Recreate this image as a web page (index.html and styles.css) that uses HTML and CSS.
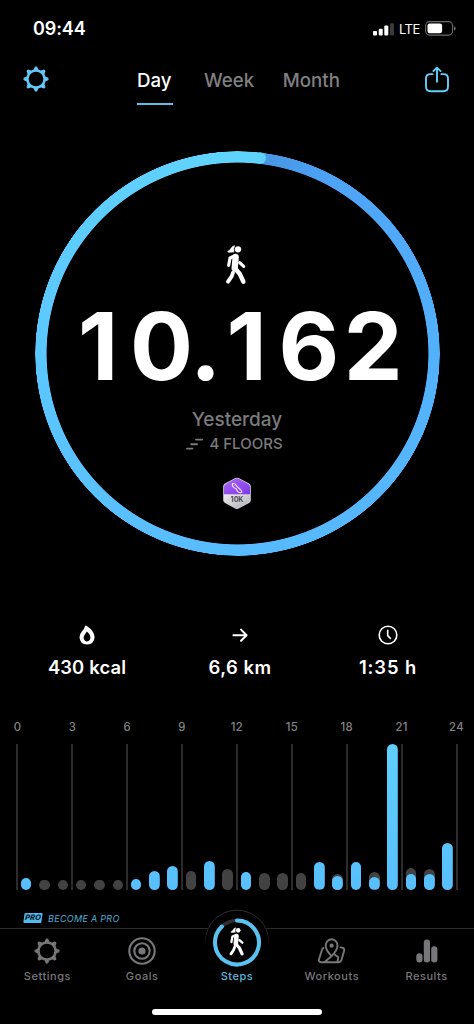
FILE: index.html
```html
<!DOCTYPE html>
<html lang="en">
<head>
<meta charset="utf-8">
<title>Steps</title>
<link rel="stylesheet" href="styles.css">
</head>
<body>
<svg class="defs" aria-hidden="true">
  <symbol id="walker" viewBox="46 28 68 124">
    <circle cx="85" cy="44" r="9.5" fill="#fff"/>
    <path d="M75 33Q70 33 65 39Q61 48 54 50Q54 54 61 53L73 52Q71 41 75 33Z" fill="#fff" stroke="#fff" stroke-width="1.5"/>
    <g fill="none" stroke="#fff" stroke-linecap="round" stroke-linejoin="round">
      <path d="M74 64L61 70L57 92" stroke-width="9.5"/>
      <path d="M78 67L75 101" stroke-width="19"/>
      <path d="M75 100L90 117L101 141" stroke-width="13.5"/>
      <path d="M70 114L66 125L55 141" stroke-width="11.5"/>
      <path d="M90 84L102 95" stroke-width="9.5"/>
    </g>
  </symbol>
  <symbol id="gear" viewBox="0 0 26 26">
    <circle cx="13" cy="13" r="8.6" fill="none" stroke="currentColor" stroke-width="2.5"/>
    <g fill="currentColor" stroke="currentColor" stroke-width="1.2" stroke-linejoin="round">
      <path id="tooth" d="M11 4.2L12.4 1.1H13.6L15 4.2Z"/>
      <use href="#tooth" transform="rotate(45 13 13)"/>
      <use href="#tooth" transform="rotate(90 13 13)"/>
      <use href="#tooth" transform="rotate(135 13 13)"/>
      <use href="#tooth" transform="rotate(180 13 13)"/>
      <use href="#tooth" transform="rotate(225 13 13)"/>
      <use href="#tooth" transform="rotate(270 13 13)"/>
      <use href="#tooth" transform="rotate(315 13 13)"/>
    </g>
  </symbol>
</svg>
<div class="screen">
  <div class="status">
    <span class="time">09:44</span>
    <div class="signals">
      <svg width="22" height="14" viewBox="0 0 22 14"><g fill="#fff"><rect x="0" y="9" width="4" height="4.6" rx="1"/><rect x="5.7" y="6.7" width="4" height="6.9" rx="1"/><rect x="11.3" y="3.6" width="4" height="10" rx="1"/><rect x="17" y="1.2" width="4" height="12.4" rx="1" fill="#3a3a3b"/></g></svg>
      <span class="lte">LTE</span>
      <svg width="31" height="15" viewBox="0 0 31 15"><rect x=".6" y=".6" width="27" height="13.5" rx="4" fill="none" stroke="#6c6c6e" stroke-width="1.1"/><rect x="2.5" y="2.4" width="14.6" height="9.9" rx="2.2" fill="#fff"/><path d="M29 5.2Q30.6 5.8 30.6 7.4T29 9.6Z" fill="#77777a"/></svg>
    </div>
  </div>

  <header class="top">
    <svg class="blue" width="26" height="26"><use href="#gear"/></svg>
    <nav class="periods">
      <span class="period on">Day</span>
      <span class="period week">Week</span>
      <span class="period month">Month</span>
    </nav>
    <svg class="share" width="26" height="28" viewBox="0 0 26 28"><g fill="none" stroke="#62d0f8" stroke-width="1.9" stroke-linecap="round" stroke-linejoin="round"><path d="M8.6 8.1H6.5Q2 8.1 2 12.6V20.5Q2 25.2 6.5 25.2H19.5Q24 25.2 24 20.5V12.6Q24 8.1 19.5 8.1H17.3"/><path d="M13 15.7V2M9.4 5.1L13 1.6L16.6 5.1"/></g></svg>
  </header>

  <main class="dial">
    <div class="ring"></div>
    <svg class="cap" width="405" height="405" viewBox="0 0 405 405"><circle cx="225.2" cy="7.1" r="5.8" fill="#5fd2fc"/></svg>
    <div class="reading">
      <svg class="walk" width="22.7" height="41.3"><use href="#walker"/></svg>
      <div class="count"><span class="one">1</span><span class="zero">0</span><span class="dot">.</span><span class="one">1</span>62</div>
      <div class="day">Yesterday</div>
      <div class="floors">
        <svg width="18" height="12" viewBox="0 0 18 12"><path d="M1 10.6H6.4M5.2 6.2H11M10 1.6H16.2" stroke="#7b7b7e" stroke-width="1.9" stroke-linecap="round"/></svg>
        <span>4 FLOORS</span>
      </div>
      <svg class="badge" width="30" height="33" viewBox="0 0 30 33">
        <defs>
          <linearGradient id="violet" x1="0" y1="0" x2="1" y2="1"><stop offset="0" stop-color="#b46cf4"/><stop offset="1" stop-color="#7a35e6"/></linearGradient>
          <linearGradient id="silver" x1="0" y1="0" x2="1" y2="1"><stop offset="0" stop-color="#f1eff3"/><stop offset="1" stop-color="#a5a5aa"/></linearGradient>
          <clipPath id="hex"><path d="M13.3 1.8Q15 .9 16.7 1.8L26.2 7Q28 8 28 10V22.6Q28 24.6 26.2 25.6L16.7 30.9Q15 31.8 13.3 30.9L3.8 25.6Q2 24.6 2 22.6V10Q2 8 3.8 7Z"/></clipPath>
        </defs>
        <path d="M13.3 1.1Q15 .2 16.7 1.1L27 6.6Q28.8 7.6 28.8 9.6V23Q28.8 25 27 26L16.7 31.6Q15 32.4 13.3 31.6L3 26Q1.2 25 1.2 23V9.6Q1.2 7.6 3 6.6Z" fill="#dad9df"/>
        <g clip-path="url(#hex)"><rect width="30" height="17.5" fill="url(#violet)"/><rect y="17.5" width="30" height="16" fill="url(#silver)"/></g>
        <path d="M10.8 6.6Q13.4 6 14.4 9L18.8 13Q20.6 15 19 15.8Q17 16 15.6 14.4L14.2 12L11.6 10.4Q9.6 8.8 10.8 6.6Z" fill="none" stroke="#efe3ff" stroke-width="1.1"/>
        <text x="15" y="25.4" text-anchor="middle" class="badge-text">10K</text>
      </svg>
    </div>
  </main>

  <section class="stats">
    <div class="stat"><svg width="20" height="20" viewBox="0 0 20 20"><path fill="#fff" fill-rule="evenodd" d="M8.2.8Q9 .2 9.8.9Q17.6 6 17.6 12.3Q17 19.4 10 19.6Q2.8 19.2 2.5 12.3Q2.5 9 4.8 6.4Q7.6 3.6 8.2.8ZM9.8 6.4Q9 8 7.8 9.4Q6.4 11.3 6.7 13.2Q7.3 16.2 10 16.4Q13 16 13.4 13Q13.5 9.2 9.8 6.4Z"/></svg><span>430 kcal</span></div>
    <div class="stat mid"><svg width="20" height="20" viewBox="0 0 20 20"><path d="M3.4 10.2H16.4M11 4.6L16.6 10.2L11 15.8" fill="none" stroke="#fff" stroke-width="2" stroke-linecap="round" stroke-linejoin="round"/></svg><span>6,6 km</span></div>
    <div class="stat end"><svg width="20" height="20" viewBox="0 0 20 20"><g fill="none" stroke="#fff" stroke-width="1.6" stroke-linecap="round" stroke-linejoin="round"><circle cx="10" cy="10" r="8.8"/><path d="M9.7 5.2V10.6L12.4 13.4"/></g></svg><span>1:35 h</span></div>
  </section>

  <section class="chart">
    <div class="hours"><span>0</span><span>3</span><span>6</span><span>9</span><span>12</span><span>15</span><span>18</span><span>21</span><span>24</span></div>
    <div class="plot">
      <div class="lines"><i></i><i></i><i></i><i></i><i></i><i></i><i></i><i></i><i></i></div>
      <div class="bars">
        <div><b style="height:12.3px"></b></div>
        <div><u style="height:10.4px"></u></div>
        <div><u style="height:10.4px"></u></div>
        <div><u style="height:10.4px"></u></div>
        <div><u style="height:10.4px"></u></div>
        <div><u style="height:10.4px"></u></div>
        <div><b style="height:11px"></b></div>
        <div><b style="height:19.3px"></b></div>
        <div><b style="height:24.4px"></b></div>
        <div><u style="height:18.6px"></u></div>
        <div><b style="height:29.4px"></b></div>
        <div><u style="height:21.2px"></u></div>
        <div><b style="height:17.8px"></b></div>
        <div><u style="height:17px"></u></div>
        <div><u style="height:17px"></u></div>
        <div><u style="height:17px"></u></div>
        <div><b style="height:27.6px"></b></div>
        <div><u style="height:15.6px"></u><b style="height:14.2px"></b></div>
        <div><b style="height:28.5px"></b></div>
        <div><u style="height:18.2px"></u><b style="height:12.6px"></b></div>
        <div><b style="height:146.5px"></b></div>
        <div><u style="height:21.8px"></u><b style="height:16px"></b></div>
        <div><u style="height:20.6px"></u><b style="height:16.4px"></b></div>
        <div><b style="height:47px"></b></div>
      </div>
    </div>
  </section>

  <div class="pro"><span class="pro-tag">PRO</span><span class="pro-text">BECOME A PRO</span></div>

  <nav class="tabs">
    <div class="tab"><svg width="28" height="28" viewBox="0 0 28 28"><use href="#gear" x="1" y="1" width="26" height="26"/></svg><span>Settings</span></div>
    <div class="tab"><svg width="28" height="28" viewBox="0 0 28 28"><g fill="none" stroke="currentColor" stroke-width="2.1"><circle cx="14" cy="14" r="12.7"/><circle cx="14" cy="14" r="7.7"/></g><circle cx="14" cy="14" r="3.6" fill="currentColor"/></svg><span>Goals</span></div>
    <div class="tab active">
      <svg class="steps-icon" width="66" height="60" viewBox="0 0 66 60">
        <defs><linearGradient id="fade" x1="0" y1="0" x2="0" y2="1"><stop offset="0" stop-color="#303032"/><stop offset=".6" stop-color="#262627"/><stop offset="1" stop-color="#000"/></linearGradient></defs>
        <circle cx="33" cy="33" r="32" fill="#000"/>
        <path d="M1.2 37V33A31.8 31.8 0 0 1 64.8 33V37" fill="none" stroke="url(#fade)" stroke-width="1"/>
        <circle cx="33" cy="33.5" r="22" fill="none" stroke="#303031" stroke-width="3.6"/>
        <path d="M33 11.5A22 22 0 1 1 17.9 17.5" fill="none" stroke="#58c3f3" stroke-width="4" stroke-linecap="round"/>
        <use href="#walker" x="24.5" y="17.5" width="17" height="30"/>
      </svg>
      <span>Steps</span>
    </div>
    <div class="tab"><svg width="28" height="28" viewBox="0 0 28 28"><g fill="none" stroke="currentColor" stroke-width="1.9" stroke-linecap="round" stroke-linejoin="round"><path d="M13.6 19.2Q7.7 13.2 7.7 8.6A5.9 6.3 0 0 1 19.5 8.6Q19.5 13.2 13.6 19.2Z"/><path d="M5.4 11Q4.5 11.2 4.2 12.3L1 22.3Q.5 25 3.2 25.2H21Q22.7 25.2 23.3 23.4L26.2 13.6Q26.7 10.6 22.5 10.4M13.6 19L7 24.8M16 17L20.3 20.2L19.4 25"/></g><circle cx="13.6" cy="8.7" r="2.1" fill="currentColor"/></svg><span>Workouts</span></div>
    <div class="tab"><svg width="28" height="28" viewBox="0 0 28 28"><g fill="currentColor"><rect x="3.3" y="16.3" width="6.2" height="9.2" rx="3"/><rect x="10.8" y="2.6" width="6.2" height="22.9" rx="3"/><rect x="18.2" y="9.3" width="6.2" height="16.2" rx="3"/></g></svg><span>Results</span></div>
  </nav>
  <div class="home"></div>
</div>
</body>
</html>
```
FILE: styles.css
```css
* { box-sizing: border-box; }
body { margin: 0; background: #000; font-family: Inter, "Liberation Sans", sans-serif; }
svg { display: block; flex: none; }
.defs { position: absolute; width: 0; height: 0; }
.screen { width: 474px; height: 1024px; background: #000; display: flex; flex-direction: column; overflow: hidden; white-space: nowrap; }

.status { height: 57px; display: flex; justify-content: space-between; align-items: center; padding: 0 18px 0 33px; }
.time { color: #fff; font-size: 18px; font-weight: 600; letter-spacing: -.1px; }
.signals { display: flex; align-items: center; gap: 4px; }
.signals svg:first-child { margin-right: -1px; margin-left: 2px; }
.lte { color: #fff; font-size: 13px; letter-spacing: -.4px; margin: 0 1px 0 1px; }

.top { height: 48px; display: flex; align-items: flex-start; padding: 10px 24px 0 23px; }
.blue { color: #62c8f8; margin-top: -1px; }
.periods { display: flex; margin-left: 88px; flex: 1; }
.period { color: #808083; font-size: 18.7px; font-weight: 500; line-height: 28px; height: 37.5px; }
.period.on { color: #fff; width: 36px; border-bottom: 2.5px solid #5dbfe8; }
.week { margin-left: 31px; }
.month { margin-left: 28.5px; }
.share { margin-top: -1.5px; }

.dial { display: grid; width: 405px; height: 405px; margin: 46px 0 0 34.5px; }
.dial > * { grid-area: 1 / 1; }
.ring { border-radius: 50%;
  background: conic-gradient(from 6.6deg, #4796e4 0deg, #4ea4f7 25deg, #53b1fc 83deg, #58bbff 173deg, #5bc7ff 263deg, #60d3fe 345deg, #5fd2fc 360deg);
  -webkit-mask: radial-gradient(circle, transparent 190.5px, #000 191.3px, #000 202px, transparent 202.6px);
  mask: radial-gradient(circle, transparent 190.5px, #000 191.3px, #000 202px, transparent 202.6px); }
.cap, .reading { z-index: 1; }
.reading { display: flex; flex-direction: column; align-items: center; padding-top: 93px; }
.walk { margin-right: 2px; }
.count { color: #fff; font-size: 93.5px; font-weight: 700; line-height: 100px; letter-spacing: 4.4px; margin: 11px 0 0 11px; }
.one { padding-right: 7.3px; }
.zero { letter-spacing: -3.2px; }
.dot { margin-right: 1px; }
.day { color: #7b7b7e; font-size: 19px; font-weight: 500; line-height: 24px; margin-top: 12px; }
.floors { display: flex; align-items: center; gap: 5px; color: #7b7b7e; font-size: 15px; font-weight: 500; line-height: 20px; margin: 2px 5px 0 0; }
.badge { margin-top: 22.5px; }
.badge-text { font: 700 7px Inter, sans-serif; fill: #4c4a50; }

.stats { display: flex; margin-top: 69px; height: 60px; }
.stat { width: 158px; padding-left: 16px; display: flex; flex-direction: column; align-items: center; color: #fff; font-size: 18.4px; font-weight: 600; line-height: 24px; gap: 10px; letter-spacing: .15px; }
.mid { padding-left: 6px; letter-spacing: .5px; }
.end { padding: 0 14px 0 0; letter-spacing: .9px; }

.chart { padding: 34px 17px 0; }
.hours { display: flex; justify-content: space-between; margin: 0 -17px; color: #838386; font-size: 11.3px; font-weight: 500; line-height: 16px; letter-spacing: .4px; }
.hours span { width: 35px; text-align: center; }
.plot { display: grid; height: 146px; margin-top: 9px; }
.plot > * { grid-area: 1 / 1; }
.lines { display: flex; justify-content: space-between; margin: 0 -.7px; }
.lines i { width: 1.4px; background: #2c2c2d; }
.bars { display: flex; }
.bars div { flex: 1; display: grid; justify-items: center; align-items: end; }
.bars b, .bars u { grid-area: 1 / 1; width: 10.6px; max-height: 146px; border-radius: 6px; }
.bars b { background: linear-gradient(#5fd0fb 0, #58bffd 100%) bottom / 100% 147px; }
.bars u { background: #424243; }

.pro { display: flex; align-items: center; gap: 6px; height: 14px; margin: 21px 0 0 24px; color: #4eaed8; font-style: italic; }
.pro-tag { background: #55baf0; color: #05202e; font-size: 7.5px; font-weight: 800; line-height: 10px; width: 18px; height: 9.5px; text-align: center; transform: skewX(-8deg); border-radius: 1px; }
.pro-text { font-size: 9px; letter-spacing: .3px; }

.tabs { display: grid; grid-template-columns: repeat(5, 1fr); border-top: 1px solid #2b2b2c; height: 80.5px; margin-top: 3px; }
.tab { display: flex; flex-direction: column; align-items: center; padding-top: 8px; gap: 3px; color: #77777a; font-size: 11px; font-weight: 500; line-height: 16px; letter-spacing: .55px; }
.active { color: #57b8dd; padding-top: 0; }
.steps-icon { margin-top: -20px; margin-bottom: -4px; }
.home { width: 170px; height: 6px; border-radius: 3px; background: #fff; margin-left: 152px; flex: none; }
```
